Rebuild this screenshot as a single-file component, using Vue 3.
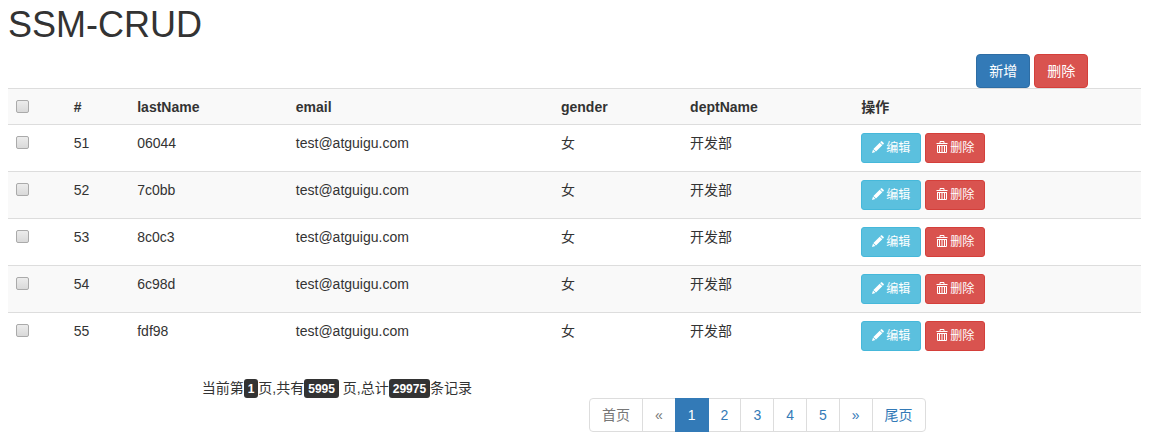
<script setup>
import { ref } from 'vue'

const employees = [
  { id: 51, name: '06044' },
  { id: 52, name: '7c0bb' },
  { id: 53, name: '8c0c3' },
  { id: 54, name: '6c98d' },
  { id: 55, name: 'fdf98' }
]
const selected = ref([])
const pages = ['1', '2', '3', '4', '5']

function toggleAll(event) {
  selected.value = event.target.checked ? employees.map((e) => e.id) : []
}
</script>

<template>
  <main class="page">
    <h1>SSM-CRUD</h1>

    <div class="row">
      <div class="toolbar">
        <button type="button" class="btn primary">新增</button>
        <button type="button" class="btn danger">删除</button>
      </div>
    </div>

    <table class="employees">
      <colgroup>
        <col class="c-check" />
        <col class="c-id" />
        <col class="c-name" />
        <col class="c-email" />
        <col class="c-gender" />
        <col class="c-dept" />
        <col />
      </colgroup>
      <thead>
        <tr>
          <th><input type="checkbox" aria-label="全选" @change="toggleAll" /></th>
          <th>#</th>
          <th>lastName</th>
          <th>email</th>
          <th>gender</th>
          <th>deptName</th>
          <th>操作</th>
        </tr>
      </thead>
      <tbody>
        <tr v-for="e in employees" :key="e.id">
          <td><input v-model="selected" type="checkbox" :value="e.id" :aria-label="`选择 ${e.id}`" /></td>
          <td>{{ e.id }}</td>
          <td>{{ e.name }}</td>
          <td>test@atguigu.com</td>
          <td>女</td>
          <td>开发部</td>
          <td>
            <div class="actions">
              <button type="button" class="btn small info">
                <svg viewBox="0 0 12 12" aria-hidden="true">
                  <path d="M0 12 L1 8.6 L3.4 11 Z M1.4 8 L7.7 1.7 L10.3 4.3 L4 10.6 Z M8.2 1.2 L9.1 0.3 Q9.5 0 9.9 0.3 L11.7 2.1 Q12 2.5 11.7 2.9 L10.8 3.8 Z" fill="currentColor" />
                </svg>
                <span>编辑</span>
              </button>
              <button type="button" class="btn small danger">
                <svg viewBox="0 0 12 12" aria-hidden="true">
                  <path d="M0.5 2.5 H11.5 M4 2.5 V0.5 H8 V2.5 M1 4.5 H11 M1.5 4.5 V11.5 H10.5 V4.5 M3.5 5 V11 M6 5 V11 M8.5 5 V11" fill="none" stroke="currentColor" />
                </svg>
                <span>删除</span>
              </button>
            </div>
          </td>
        </tr>
      </tbody>
    </table>

    <div class="row">
      <p class="summary">当前第<span class="label">1</span>页,共有<span class="label">5995</span> 页,总计<span class="label">29975</span>条记录</p>
      <nav class="pager" aria-label="分页">
        <ul>
          <li class="disabled"><a href="#">首页</a></li>
          <li class="disabled"><a href="#" aria-label="上一页">«</a></li>
          <li v-for="p in pages" :key="p" :class="{ active: p === '1' }"><a href="#">{{ p }}</a></li>
          <li><a href="#" aria-label="下一页">»</a></li>
          <li><a href="#">尾页</a></li>
        </ul>
      </nav>
    </div>
  </main>
</template>

<style>
body {
  background: #fff;
}
</style>

<style scoped>
.page,
.page * {
  box-sizing: border-box;
}
.page {
  padding-top: 5px;
  font-family: "Liberation Sans", "Noto Sans CJK SC", sans-serif;
  font-size: 14px;
  line-height: 20px;
  color: #333;
}
h1 {
  margin: 0 8px 9px;
  font-size: 36px;
  font-weight: 400;
  line-height: 40px;
}
.row {
  display: grid;
  grid-template-columns: repeat(12, minmax(0, 1fr));
}
.toolbar {
  grid-column: 11 / 13;
  display: flex;
  gap: 4px;
  padding-left: 8px;
}
.btn {
  font: inherit;
  color: #fff;
  padding: 6px 12px;
  border: 1px solid;
  border-radius: 4px;
  white-space: nowrap;
  cursor: pointer;
}
.primary {
  background: #337ab7;
  border-color: #2e6da4;
}
.danger {
  background: #d9534f;
  border-color: #d43f3a;
}
.info {
  background: #5bc0de;
  border-color: #46b8da;
}
.small {
  display: flex;
  align-items: center;
  gap: 2px;
  padding: 5px 10px;
  font-size: 12px;
  line-height: 18px;
  border-radius: 3px;
}
.small svg {
  width: 12px;
  height: 12px;
  margin-bottom: 2px;
}
.actions {
  display: flex;
  gap: 4px;
}
.employees {
  width: calc(100% - 29px);
  margin: 0 21px 19px 8px;
  table-layout: fixed;
  border-collapse: separate;
  border-spacing: 0;
}
.c-check { width: 5.1%; }
.c-id { width: 5.6%; }
.c-name { width: 14%; }
.c-email { width: 23.4%; }
.c-gender { width: 11.4%; }
.c-dept { width: 15.1%; }
th,
td {
  padding: 8px;
  border-top: 1px solid #ddd;
  text-align: left;
  vertical-align: top;
}
th {
  padding-bottom: 7px;
  font-weight: 700;
}
thead tr,
tbody tr:nth-child(even) {
  background: #f9f9f9;
}
input[type="checkbox"] {
  appearance: none;
  display: block;
  width: 13px;
  height: 13px;
  margin: 3px 0 4px;
  border: 1px solid #aaa;
  border-radius: 2px;
  background: linear-gradient(#ececec, #d9d9d9);
}
input[type="checkbox"]:checked {
  background: #337ab7;
}
.summary {
  grid-column: 3 / 7;
  margin: 0;
  padding-left: 8px;
}
.label {
  padding: 3px 4px 2px;
  border-radius: 3px;
  background: #333;
  color: #fff;
  font-size: 12px;
  font-weight: 700;
}
.pager {
  grid-column: 7 / 13;
  padding-left: 8px;
}
.pager ul {
  display: flex;
  margin: 20px 0 0;
  padding: 0;
  list-style: none;
}
.pager a {
  display: block;
  margin-left: -1px;
  padding: 6px 12px;
  border: 1px solid #ddd;
  background: #fff;
  color: #337ab7;
  text-decoration: none;
}
.pager li:first-child a {
  margin-left: 0;
  border-radius: 4px 0 0 4px;
}
.pager li:last-child a {
  border-radius: 0 4px 4px 0;
}
.pager .disabled a {
  color: #777;
}
.pager .active {
  z-index: 1;
}
.pager .active a {
  background: #337ab7;
  border-color: #337ab7;
  color: #fff;
}
</style>
